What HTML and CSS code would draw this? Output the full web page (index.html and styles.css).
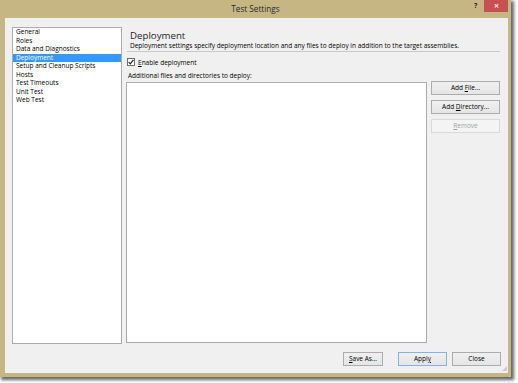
FILE: index.html
```html
<html>
<head>
<meta charset="UTF-8">
<title>Test Settings</title>
<link rel="stylesheet" href="styles.css">
</head>
<body>
<div class="window">
  <div class="titlebar">
    <span class="title">Test Settings</span>
    <span class="help">?</span>
    <span class="close">&#x2715;</span>
  </div>
  <div class="client">
    <div class="main">
      <ul class="pages">
        <li>General</li>
        <li>Roles</li>
        <li>Data and Diagnostics</li>
        <li class="selected">Deployment</li>
        <li>Setup and Cleanup Scripts</li>
        <li>Hosts</li>
        <li>Test Timeouts</li>
        <li>Unit Test</li>
        <li>Web Test</li>
      </ul>
      <div class="panel">
        <div class="header">
          <div class="heading">Deployment</div>
          <div class="desc">Deployment settings specify deployment location and any files to deploy in addition to the target assemblies.</div>
        </div>
        <label class="check">
          <span class="box"><svg width="6" height="6" viewBox="0 0 6 6"><path d="M0.6 3.1 L2.3 4.9 L5.4 0.8" fill="none" stroke="#222" stroke-width="1.2"/></svg></span>
          <span><u>E</u>nable deployment</span>
        </label>
        <div class="caption">Additional files and directories to deploy:</div>
        <div class="files">
          <div class="filelist"></div>
          <div class="sidebuttons">
            <button class="btn">Add <u>F</u>ile...</button>
            <button class="btn">Add <u>D</u>irectory...</button>
            <button class="btn disabled"><u>R</u>emove</button>
          </div>
        </div>
      </div>
    </div>
    <div class="footer">
      <button class="btn save"><u>S</u>ave As...</button>
      <button class="btn default">Appl<u>y</u></button>
      <button class="btn">Close</button>
    </div>
    <div class="grip"></div>
  </div>
</div>
</body>
</html>
```

FILE: styles.css
```css
body { margin: 0; background: #ffffff; font-family: "Open Sans", "Noto Sans", sans-serif; font-size: 6.5px; color: #000; }

.window { width: 511px; height: 377px; background: #c6b684; box-shadow: 2px 2px 3px 1px rgba(0,0,0,0.6); display: flex; flex-direction: column; }

.titlebar { height: 18px; position: relative; display: flex; justify-content: center; align-items: center; }
.titlebar .title { font-size: 8.2px; color: #2b2b2b; line-height: 18px; }
.titlebar .help { position: absolute; left: 474px; top: 1px; font-size: 7px; font-weight: bold; color: #222; line-height: 10px; }
.titlebar .close { position: absolute; left: 484px; top: 0; width: 24px; height: 12px; background: #c75050; color: #fff; font-size: 6px; font-weight: bold; line-height: 12px; text-align: center; }

.client { position: relative; margin: 0 3px 4px 5px; height: 355px; background: #f0f0f0; box-sizing: border-box; padding: 9px 7px 7px 7px; }

.main { display: flex; gap: 4px; height: 317px; align-items: flex-start; }

.pages { list-style: none; margin: 0; padding: 0; width: 110px; height: 317px; box-sizing: border-box; background: #fff; border: 1px solid #acacac; }
.pages li { line-height: 8.5px; height: 8.5px; padding-left: 3px; white-space: nowrap; }
.pages li.selected { background: #3399ff; color: #fff; }

.panel { width: 374px; display: flex; flex-direction: column; }
.header { margin-left: 1px; border-bottom: 1px solid #c8c8c8; padding-bottom: 1px; }
.heading { font-size: 9.7px; line-height: 13px; height: 13px; margin-top: 1.5px; padding-left: 3px; color: #1e1e1e; }
.desc { line-height: 8px; height: 8px; padding-left: 3px; white-space: nowrap; }

.check { display: flex; align-items: center; gap: 3px; margin: 6px 0 0 1px; height: 9px; }
.check .box { width: 6px; height: 6px; border: 1px solid #6d6d6d; background: #fff; display: flex; }
.caption { line-height: 8px; margin-top: 5px; padding-left: 2px; }

.files { display: flex; gap: 4px; margin-top: 2px; }
.filelist { width: 301px; height: 261px; box-sizing: border-box; background: #fff; border: 1px solid #acacac; }
.sidebuttons { display: flex; flex-direction: column; gap: 5px; margin-top: -1px; }
.sidebuttons .btn { width: 69px; }

.btn { height: 14px; box-sizing: border-box; border: 1px solid #acacac; background: linear-gradient(#f0f0f0, #e5e5e5); font-family: inherit; font-size: 6.5px; color: #000; padding: 0; line-height: 12px; }
.btn.disabled { background: #f4f4f4; border-color: #d9d9d9; color: #a3a3a3; }
.btn.default { border-color: #7eb4ea; }

.footer { display: flex; justify-content: flex-end; margin-top: 8px; }
.footer .btn { width: 49px; margin-left: 5px; }
.footer .btn.save { width: 40px; margin-right: 10px; }

.grip { position: absolute; right: 1px; bottom: 2px; width: 5px; height: 5px; background: radial-gradient(circle, #b8b8b8 0.6px, transparent 0.9px) 0 0 / 2px 2px; clip-path: polygon(100% 0, 100% 100%, 0 100%); }
```
